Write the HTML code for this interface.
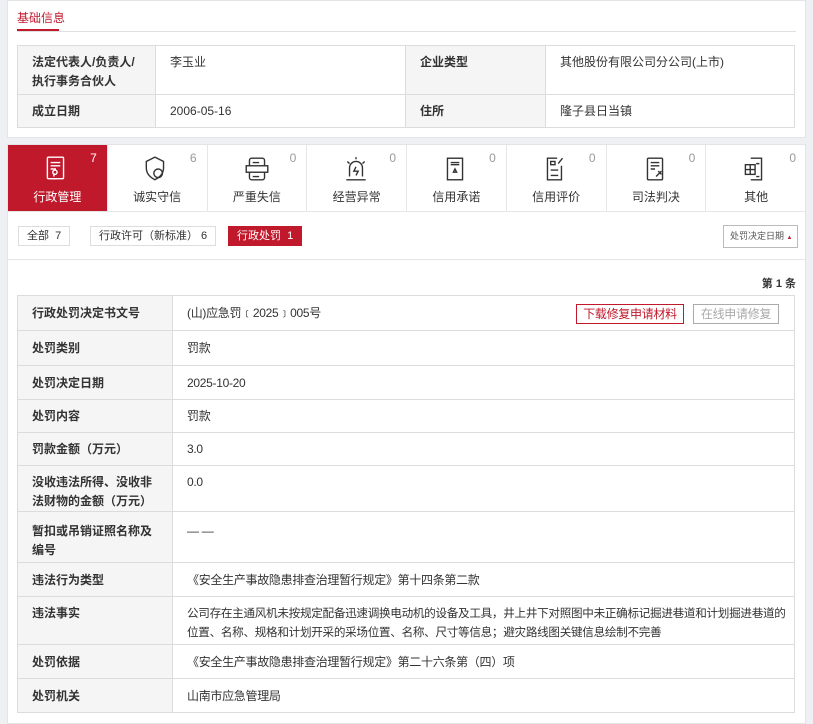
<!DOCTYPE html>
<html><head><meta charset="utf-8"><style>
*{box-sizing:border-box;margin:0;padding:0}
body{width:813px;height:710px;overflow:hidden;background:#eef0f4;font-family:"Liberation Sans","Noto Sans CJK SC",sans-serif;font-size:12px;color:#333;position:relative}
.p{position:absolute;background:#fff;border:1px solid #e2e4e8}
table{border-collapse:collapse;position:absolute}
td{border:1px solid #dcdcdc;vertical-align:top;padding:0 14px;line-height:19px}
td.l{background:#f5f5f5;font-weight:bold;color:#333}
.v td:not(.l){letter-spacing:-0.3px}
.tab{position:absolute;top:0;height:66px;width:99.75px;border-right:1px solid #e6e6e6;text-align:center;color:#333}
.tab .n{position:absolute;right:10px;top:6px;color:#999;font-size:12px}
.tab .t{position:absolute;top:43px;left:0;right:0;font-size:12px}
.tab svg{position:absolute;left:36px;top:10px}
.btn{position:absolute;height:20px;line-height:18px;border:1px solid #ddd;font-size:11px;padding:0 8px;color:#333;white-space:nowrap}
</style></head><body>
<div class="p" style="left:7px;top:0;width:799px;height:138px">
 <div style="position:absolute;left:9px;top:8px;color:#c0192c;font-size:12px">基础信息</div>
 <div style="position:absolute;left:9px;top:28px;width:42px;height:3px;background:#c0192c"></div>
 <div style="position:absolute;left:9px;top:30px;right:9px;height:1px;background:#e0e0e0"></div>
 <table style="left:9px;top:44px;width:778px">
  <tr style="height:49px"><td class="l" style="width:138px;padding-top:7px">法定代表人/负责人/执行事务合伙人</td><td style="width:250px;padding-top:7px">李玉业</td><td class="l" style="width:140px;padding-top:7px">企业类型</td><td style="padding-top:7px">其他股份有限公司分公司(上市)</td></tr>
  <tr style="height:33px"><td class="l" style="padding-top:7px">成立日期</td><td style="padding-top:7px">2006-05-16</td><td class="l" style="padding-top:7px">住所</td><td style="padding-top:7px">隆子县日当镇</td></tr>
 </table>
</div>
<div class="p" style="left:7px;top:144px;width:799px;height:580px">
 <div style="position:absolute;left:0;top:0;width:798px;height:67px;border-bottom:1px solid #e6e6e6">
  <div class="tab" style="left:0;background:#c0192c;color:#fff"><span class="n" style="color:#fff">7</span><svg width="24" height="28" viewBox="0 0 22 26" fill="none" stroke="#fff" stroke-width="1.3"><rect x="3" y="2" width="15" height="20" rx="1"/><path d="M6 7h9M6 10h9M6 13h5M9 17v3M6 22h6"/><circle cx="10" cy="16" r="2"/></svg><span class="t">行政管理</span></div>
  <div class="tab" style="left:99.75px"><span class="n">6</span><svg width="24" height="28" viewBox="0 0 22 26" fill="none" stroke="#333" stroke-width="1.3"><path d="M10 2l8 4v6c0 6-4 9-8 11-4-2-8-5-8-11V6z"/><circle cx="13" cy="17" r="4"/></svg><span class="t">诚实守信</span></div>
  <div class="tab" style="left:199.5px"><span class="n">0</span><svg width="26" height="28" viewBox="0 0 24 26" fill="none" stroke="#333" stroke-width="1.3"><rect x="5" y="3" width="14" height="20" rx="2"/><rect x="2" y="10" width="20" height="6" fill="#fff"/><path d="M8 7h6M8 20h6"/></svg><span class="t">严重失信</span></div>
  <div class="tab" style="left:299.25px"><span class="n">0</span><svg width="26" height="28" viewBox="0 0 24 26" fill="none" stroke="#333" stroke-width="1.3"><path d="M6 20v-8a6 6 0 0 1 12 0v8M3 23h18M12 2v2M4 6l2 2M20 6l-2 2M12 11l-2 4h4l-2 4"/></svg><span class="t">经营异常</span></div>
  <div class="tab" style="left:399px"><span class="n">0</span><svg width="24" height="28" viewBox="0 0 22 26" fill="none" stroke="#333" stroke-width="1.3"><rect x="4" y="3" width="14" height="20"/><path d="M7 7h8M7 9h8M11 13l1.5 3h-3z"/></svg><span class="t">信用承诺</span></div>
  <div class="tab" style="left:498.75px"><span class="n">0</span><svg width="24" height="28" viewBox="0 0 22 26" fill="none" stroke="#333" stroke-width="1.3"><path d="M17 10v13H4V3h9"/><rect x="7" y="6" width="4" height="3"/><path d="M7 14h7M7 19h7M14 8l4-5"/></svg><span class="t">信用评价</span></div>
  <div class="tab" style="left:598.5px"><span class="n">0</span><svg width="24" height="28" viewBox="0 0 22 26" fill="none" stroke="#333" stroke-width="1.3"><rect x="4" y="3" width="14" height="20" rx="1"/><path d="M7 7h8M7 10h8M7 13h4M12 20l5-5M14 15l3 3"/></svg><span class="t">司法判决</span></div>
  <div class="tab" style="left:698.25px;border-right:0"><span class="n">0</span><svg width="24" height="28" viewBox="0 0 22 26" fill="none" stroke="#333" stroke-width="1.3"><path d="M8 3h10v20H8"/><rect x="3" y="9" width="9" height="9"/><path d="M3 13.5h9M7.5 9v9M13 8h3M13 20h3"/></svg><span class="t">其他</span></div>
 </div>
 <div class="btn" style="left:10px;top:81px">全部&nbsp; 7</div>
 <div class="btn" style="left:82px;top:81px">行政许可（新标准）&nbsp;6</div>
 <div class="btn" style="left:220px;top:81px;background:#c0192c;border-color:#c0192c;color:#fff">行政处罚&nbsp; 1</div>
 <div class="btn" style="left:715px;top:80px;width:75px;height:23px;line-height:21px;border-color:#bbb;font-size:9px;color:#555;padding:0 6px">处罚决定日期 <span style="color:#c0192c;font-size:6px">▲</span></div>
 <div style="position:absolute;left:0;right:0;top:114px;height:1px;background:#e6e6e6"></div>
 <div style="position:absolute;right:9px;top:130px;font-size:11px;font-weight:bold">第 1 条</div>
 <table class="v" style="left:9px;top:150px;width:778px">
  <tr style="height:35px"><td class="l" style="width:155px;padding-top:8px">行政处罚决定书文号</td><td style="padding-top:8px;position:relative">(山)应急罚﹝2025﹞005号
   <span style="position:absolute;left:403px;top:8px;width:108px;height:20px;border:1px solid #c0192c;color:#c0192c;text-align:center;line-height:18px">下载修复申请材料</span>
   <span style="position:absolute;left:520px;top:8px;width:86px;height:20px;border:1px solid #aaa;color:#aaa;text-align:center;line-height:18px">在线申请修复</span></td></tr>
  <tr style="height:35px"><td class="l" style="padding-top:8px">处罚类别</td><td style="padding-top:8px">罚款</td></tr>
  <tr style="height:34px"><td class="l" style="padding-top:8px">处罚决定日期</td><td style="padding-top:8px">2025-10-20</td></tr>
  <tr style="height:33px"><td class="l" style="padding-top:7px">处罚内容</td><td style="padding-top:7px">罚款</td></tr>
  <tr style="height:33px"><td class="l" style="padding-top:7px">罚款金额（万元）</td><td style="padding-top:7px">3.0</td></tr>
  <tr style="height:46px"><td class="l" style="padding-top:7px">没收违法所得、没收非法财物的金额（万元）</td><td style="padding-top:7px">0.0</td></tr>
  <tr style="height:51px"><td class="l" style="padding-top:10px">暂扣或吊销证照名称及编号</td><td style="padding-top:10px">— —</td></tr>
  <tr style="height:34px"><td class="l" style="padding-top:8px">违法行为类型</td><td style="padding-top:8px">《安全生产事故隐患排查治理暂行规定》第十四条第二款</td></tr>
  <tr style="height:48px"><td class="l" style="padding-top:7px">违法事实</td><td style="padding-top:7px;padding-right:8px;font-size:11.6px">公司存在主通风机未按规定配备迅速调换电动机的设备及工具，井上井下对照图中未正确标记掘进巷道和计划掘进巷道的位置、名称、规格和计划开采的采场位置、名称、尺寸等信息；避灾路线图关键信息绘制不完善</td></tr>
  <tr style="height:34px"><td class="l" style="padding-top:8px">处罚依据</td><td style="padding-top:8px">《安全生产事故隐患排查治理暂行规定》第二十六条第（四）项</td></tr>
  <tr style="height:34px"><td class="l" style="padding-top:8px">处罚机关</td><td style="padding-top:8px">山南市应急管理局</td></tr>
 </table>
</div>
</body></html>
